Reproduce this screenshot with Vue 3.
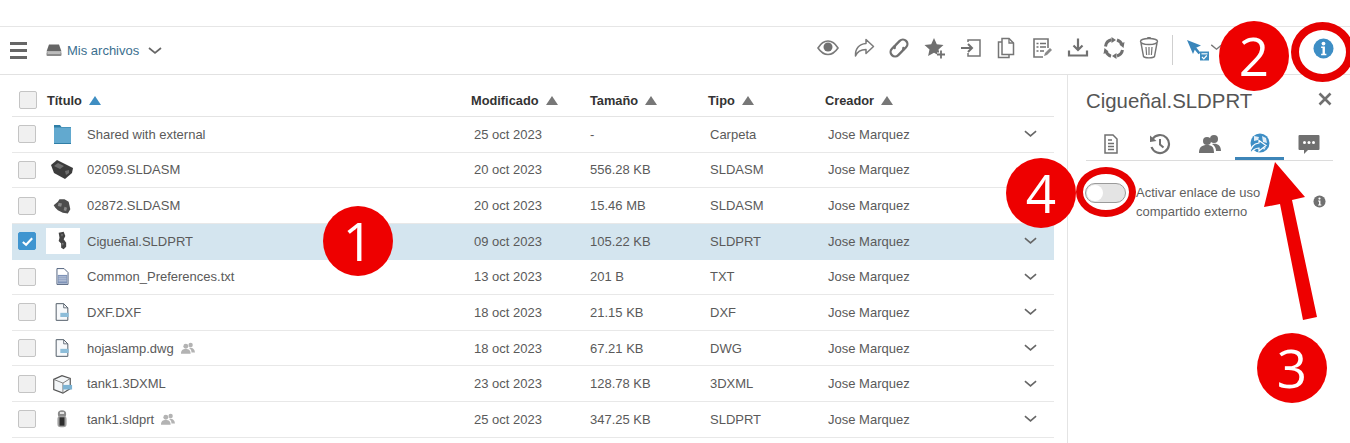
<script setup>
const rows = [
  { name: 'Shared with external', date: '25 oct 2023', size: '-', type: 'Carpeta', icon: 'folder', px: 24 },
  { name: '02059.SLDASM', date: '20 oct 2023', size: '556.28 KB', type: 'SLDASM', icon: 'asm1', px: 24 },
  { name: '02872.SLDASM', date: '20 oct 2023', size: '15.46 MB', type: 'SLDASM', icon: 'asm2', px: 20 },
  { name: 'Cigueñal.SLDPRT', date: '09 oct 2023', size: '105.22 KB', type: 'SLDPRT', icon: 'crank', px: 20, selected: true },
  { name: 'Common_Preferences.txt', date: '13 oct 2023', size: '201 B', type: 'TXT', icon: 'txt', px: 19 },
  { name: 'DXF.DXF', date: '18 oct 2023', size: '21.15 KB', type: 'DXF', icon: 'doc', px: 20 },
  { name: 'hojaslamp.dwg', date: '18 oct 2023', size: '67.21 KB', type: 'DWG', icon: 'doc', px: 20, shared: true },
  { name: 'tank1.3DXML', date: '23 oct 2023', size: '128.78 KB', type: '3DXML', icon: 'cube', px: 22 },
  { name: 'tank1.sldprt', date: '25 oct 2023', size: '347.25 KB', type: 'SLDPRT', icon: 'tank', px: 20, shared: true },
]
const heads = ['Modificado', 'Tamaño', 'Tipo', 'Creador']
</script>

<template>
  <div class="page">
    <div class="top"></div>
    <header class="toolbar">
      <div class="burger"><i></i><i></i><i></i></div>
      <svg class="drive" viewBox="0 0 16 12" width="16" height="13"><path d="M3 0h10l2.500 7h-15z" fill="#666"/><rect x="0.500" y="7.500" width="15" height="4" rx="1" fill="#8a8a8a"/><rect x="1.500" y="8" width="13" height="1" fill="#eee"/></svg>
      <span class="crumb">Mis archivos</span>
      <svg class="crumb-chev" viewBox="0 0 14 8" width="14" height="8"><path d="M1 1l6 5 6-5" fill="none" stroke="#666" stroke-width="1.700"/></svg>
      <div class="tools">
        <svg viewBox="0 0 22 22" class="t"><path d="M1 11c3-5 6.500-7 10-7s7 2 10 7c-3 4.500-6.500 6.500-10 6.500S4 15.500 1 11z" fill="none" stroke="#7a7a7a" stroke-width="1.600"/><circle cx="11" cy="10" r="4.500" fill="#707070"/></svg>
        <svg viewBox="0 0 22 22" class="t"><path d="M13 2.500l7.500 7-7.500 7v-4c-5 0-8.500 1.500-10.500 6.500C2 12 6 7 13 6.500z" fill="none" stroke="#7a7a7a" stroke-width="1.500" stroke-linejoin="round"/></svg>
        <svg viewBox="0 0 22 22" class="t"><g fill="none" stroke="#707070" stroke-width="2.300" stroke-linecap="round" transform="rotate(-45 11 11)"><path d="M9.500 6.500H5.500a4.500 4.500 0 0 0 0 9H11a4.500 4.500 0 0 0 3.200-1.500"/><path d="M12.500 15.500h4a4.500 4.500 0 0 0 0-9H11a4.500 4.500 0 0 0-3.200 1.500"/></g></svg>
        <svg viewBox="0 0 22 22" class="t"><path d="M10 1l2.800 6.300 6.700.7-5 4.500 1.400 6.600L10 15.800l-5.900 3.300 1.400-6.600-5-4.500 6.700-.7z" fill="#707070"/><path d="M13 17.500h8M17 13.500v8" stroke="#fff" stroke-width="4"/><path d="M13 17.500h8M17 13.500v8" stroke="#707070" stroke-width="1.800"/></svg>
        <svg viewBox="0 0 22 22" class="t"><path d="M8 5V3h12v16H8v-3" fill="none" stroke="#757575" stroke-width="1.500"/><path d="M1 11h10M8 7l4 4-4 4" fill="none" stroke="#707070" stroke-width="2"/></svg>
        <svg viewBox="0 0 22 22" class="t"><path d="M7 1.500h7l4.500 4.500v11.500H7z" fill="#fff" stroke="#757575" stroke-width="1.500"/><path d="M14 1.500V6h4.500" fill="none" stroke="#757575" stroke-width="1.300"/><path d="M7 5H3.500v15.500H14v-3" fill="none" stroke="#757575" stroke-width="1.500"/></svg>
        <svg viewBox="0 0 22 22" class="t"><path d="M17 11V2H3v18h9" fill="none" stroke="#757575" stroke-width="1.600"/><path d="M5.500 6.500h2M9 6.500h6M5.500 10h2M9 10h6M5.500 14h2M9 14h4" stroke="#707070" stroke-width="1.400"/><path d="M13 19l1-3 5-5 2 2-5 5z" fill="#8a8a8a"/></svg>
        <svg viewBox="0 0 22 22" class="t"><path d="M11 1.500v11M6.500 8.500l4.500 4.500 4.500-4.500" fill="none" stroke="#707070" stroke-width="2.200"/><path d="M2 13.500v5h18v-5" fill="none" stroke="#707070" stroke-width="2.200"/></svg>
        <svg viewBox="0 0 22 22" class="t"><path d="M2.500 9.500C3 6 5 3.500 8.500 2.800M14 3c2.500.8 4.300 2.500 5 5M19.500 13c-.5 3-2.500 5-5.500 6M8 19.200c-2.500-.7-4.300-2.500-5-5" fill="none" stroke="#707070" stroke-width="3"/><path d="M8.500 0l4.500 3-4.500 3zM21.500 5l-1 6-4-3.500zM13.500 22l-4.500-3 4.500-3zM.5 17l1-6 4 3.500z" fill="#707070"/></svg>
        <svg viewBox="0 0 22 22" class="t"><ellipse cx="11" cy="4.500" rx="8.500" ry="3" fill="none" stroke="#757575" stroke-width="1.400"/><path d="M8.500 2l1-1.500h3l1 1.500" fill="none" stroke="#757575"/><path d="M3 6l2.500 13.500c1.500 1.800 9.500 1.800 11 0L19 6" fill="none" stroke="#757575" stroke-width="1.400"/><path d="M8 10l.6 8M11 10v8M14 10l-.6 8" stroke="#757575" stroke-width="1.200"/></svg>
        <span class="sep"></span>
        <svg viewBox="0 0 24 22" class="cursor"><path d="M1 1l14 5.500-5.500 2.500L7 15z" fill="#3a86bb"/><path d="M9 9l4.500 5.500" stroke="#3a86bb" stroke-width="2.600"/><rect x="14" y="12.500" width="9" height="9" fill="#3e8dc0"/><rect x="15.500" y="14" width="6" height="1.500" fill="#cfe3f0"/><path d="M16 18l1.800 1.800 3-3.300" fill="none" stroke="#fff" stroke-width="1.200"/></svg>
        <svg viewBox="0 0 14 8" width="13" height="7" class="cursor-chev"><path d="M1 1l6 5 6-5" fill="none" stroke="#777" stroke-width="1.500"/></svg>
      </div>
      <svg viewBox="0 0 22 22" class="info-main"><circle cx="11" cy="11" r="10.500" fill="#3d8ec5"/><circle cx="11" cy="5.800" r="2" fill="#fff"/><path d="M8.500 9h4v7.500H14v1.500H8.500v-1.500H10V10.500H8.500z" fill="#fff"/></svg>
    </header>

    <main class="body">
      <section class="list">
        <div class="head">
          <span class="box"></span>
          <span class="hcell"><b>Título</b><i class="tri blue"></i></span>
          <span v-for="h in heads" :key="h" class="hcell"><b>{{ h }}</b><i class="tri"></i></span>
        </div>
        <div v-for="r in rows" :key="r.name" class="row" :class="{ selected: r.selected }">
          <span class="box" :class="{ checked: r.selected }">
            <svg v-if="r.selected" viewBox="0 0 16 16" width="15" height="15"><path d="M3 8.500l3.500 3L13 4.500" fill="none" stroke="#fff" stroke-width="2.200"/></svg>
          </span>
          <span class="thumb">
            <svg viewBox="0 0 24 24" :style="{ width: r.px + 'px', height: r.px + 'px' }">
              <template v-if="r.icon === 'folder'">
                <path d="M4 3h6l1.500 2H21v17H4z" fill="#2f7ea6"/><rect x="4" y="5.500" width="17" height="15.500" fill="#62a9cf"/>
              </template>
              <template v-else-if="r.icon === 'asm1'">
                <path d="M1 7l6-5 16 8-1 5-7 6-11-6z" fill="#3c3c3c"/><path d="M4 8l4-3 6 3-4 3zM15 13l4-1 0 3-3 2z" fill="#6e6e6e"/>
              </template>
              <template v-else-if="r.icon === 'asm2'">
                <path d="M2 11l5-4 2-3 6 0 5 3 2 9-3 5-6-1-6-3-3-3z" fill="#4d4d4d"/><path d="M8 8l4 1-1 4-4-1zM15 13l3 1-1 4-3-1z" fill="#8a8a8a"/>
              </template>
              <template v-else-if="r.icon === 'crank'">
                <path d="M8 2l6-1 2 5-2 4 3 4 0 5-3 3-3-2 0-5-3-3 1-4z" fill="#444"/><path d="M11 4h2l-1 3zM12 14l2 1-1 3z" fill="#8c8c8c"/>
              </template>
              <template v-else-if="r.icon === 'txt'">
                <path d="M5 2h9l5 5v15H5z" fill="#fff" stroke="#4c5d7a" stroke-width="1.200"/><rect x="6" y="10" width="12" height="11" fill="#7f93b8"/><path d="M7 12.500h10M7 15h10M7 17.500h10" stroke="#d8dfeb"/>
              </template>
              <template v-else-if="r.icon === 'doc'">
                <path d="M5 2h9l5 5v15H5z" fill="#f7f9fb" stroke="#55606b" stroke-width="1.200"/><path d="M14 2v5h5" fill="none" stroke="#55606b"/><rect x="10" y="13" width="10" height="5" fill="#8dbdd9"/>
              </template>
              <template v-else-if="r.icon === 'cube'">
                <path d="M3 7l9-4 9 3v11l-8 5-10-4z" fill="#f3f6f8" stroke="#555" stroke-width="1.300"/><path d="M3 7l10 4 8-5M13 11v11" fill="none" stroke="#777"/><rect x="13" y="13" width="10" height="5" fill="#7db3d3"/>
              </template>
              <template v-else>
                <ellipse cx="12" cy="6" rx="5" ry="4.500" fill="#8a8a8a"/><rect x="6.500" y="8" width="11" height="14" rx="4" fill="#a0a0a0"/><rect x="9" y="10" width="6" height="10" fill="#2d2d2d"/><rect x="9.500" y="3.500" width="5" height="2.500" fill="#e4e4e4"/>
              </template>
            </svg>
          </span>
          <span class="name">{{ r.name }}
            <svg v-if="r.shared" class="people" viewBox="0 0 16 13" width="14" height="12"><circle cx="5.500" cy="4.500" r="2.800" fill="#b3b3b3"/><circle cx="11" cy="3" r="2.500" fill="#b3b3b3"/><path d="M0 13c0-4 2-5.500 5.500-5.500S11 9 11 13zM9 6.500c3.500-1 6.500.5 7 5h-4c0-2-1-4-3-5z" fill="#b3b3b3"/></svg>
          </span>
          <span>{{ r.date }}</span>
          <span>{{ r.size }}</span>
          <span>{{ r.type }}</span>
          <span>Jose Marquez</span>
          <svg class="chev" viewBox="0 0 14 8" width="13" height="8"><path d="M1 1l6 5 6-5" fill="none" stroke="#666" stroke-width="1.700"/></svg>
        </div>
      </section>

      <aside class="panel">
        <div class="panel-head">
          <h2>Cigueñal.SLDPRT</h2>
          <svg viewBox="0 0 14 14" width="14" height="14"><path d="M1.500 1.500l11 11M12.500 1.500l-11 11" stroke="#707070" stroke-width="2.600"/></svg>
        </div>
        <nav class="tabs">
          <span class="tab">
            <svg viewBox="0 0 22 22" width="22" height="22"><path d="M5 2h8l4 4v14H5z" fill="none" stroke="#707070" stroke-width="1.500"/><path d="M8 7h4M8 10.500h6M8 13.500h6M8 16.500h6" stroke="#707070" stroke-width="1.500"/></svg>
          </span>
          <span class="tab">
            <svg viewBox="0 0 22 22" width="22" height="22"><path d="M3.500 6A9 9 0 1 1 2.500 14" fill="none" stroke="#707070" stroke-width="2.200"/><path d="M1 2.500L7.500 8 1 9z" fill="#707070"/><path d="M11 6v5.500l3.500 3" fill="none" stroke="#707070" stroke-width="2"/></svg>
          </span>
          <span class="tab">
            <svg viewBox="0 0 22 22" width="22" height="22"><circle cx="8" cy="8" r="4" fill="#707070"/><circle cx="15" cy="6" r="4" fill="#707070"/><path d="M0 20c0-6 3-8 8-8s7 2 7 8zM13 11c5-1 9 1 9 7h-5c0-3-1-5-4-7z" fill="#707070"/></svg>
          </span>
          <span class="tab active">
            <svg viewBox="0 0 22 22" width="22" height="22"><circle cx="12" cy="10" r="9.500" fill="#3d8ec5"/><path d="M6 3l5 1-1 3-4 1zM14 3l4 2 1 5-4-1zM15 15l3-1-2 3z" fill="#fff" opacity=".85"/><path d="M11 7.500l7 5-7 5.500v-3c-4 0-6 1.500-9 6 .5-7 3.500-10.500 9-11z" fill="#3d8ec5" stroke="#fff" stroke-width="1.200"/></svg>
          </span>
          <span class="tab">
            <svg viewBox="0 0 22 22" width="22" height="22"><path d="M1.500 2h19a1 1 0 0 1 1 1v13a1 1 0 0 1-1 1H10l-4 4v-4H1.500a1 1 0 0 1-1-1V3a1 1 0 0 1 1-1z" fill="#707070"/><circle cx="6.500" cy="9.500" r="1.500" fill="#fff"/><circle cx="11" cy="9.500" r="1.500" fill="#fff"/><circle cx="15.500" cy="9.500" r="1.500" fill="#fff"/></svg>
          </span>
        </nav>
        <div class="setting">
          <span class="toggle"><i></i></span>
          <p>Activar enlace de uso compartido externo</p>
          <svg viewBox="0 0 14 14" width="13" height="13" class="mini"><circle cx="7" cy="7" r="6.500" fill="#707070"/><circle cx="7" cy="3.800" r="1.200" fill="#fff"/><path d="M5.500 6h2.500v4.200h1v1H5.500v-1h1V7H5.500z" fill="#fff"/></svg>
        </div>
      </aside>
    </main>

    <span class="mark m1">1</span>
    <span class="mark m2">2</span>
    <span class="mark m3">3</span>
    <span class="mark m4">4</span>
    <span class="ring r-info"></span>
    <span class="ring r-toggle"></span>
    <svg class="arrow" viewBox="0 0 70 170" width="70" height="170"><path d="M12 1L1 46l16-3 23 116 14-3L29 39l13-3z" fill="#ee0000"/></svg>
  </div>
</template>

<style>
html, body { margin: 0; background: #fff; }
</style>

<style scoped>
.page { position: relative; width: 1350px; height: 443px; overflow: hidden; background: #fff; font: 13px "Liberation Sans", Arial, sans-serif; color: #5a5a5a; }
.top { height: 26px; border-bottom: 1px solid #e6e6e6; }
.toolbar { height: 47px; border-bottom: 1px solid #e2e2e2; display: flex; align-items: center; padding-left: 10px; }
.burger { width: 17px; display: flex; flex-direction: column; gap: 4px; margin-right: 19px; }
.burger i { height: 3px; background: #666; display: block; }
.drive { margin-right: 5px; }
.crumb { color: #3b6f8f; font-size: 13px; }
.crumb-chev { margin-left: 9px; }
.tools { position: absolute; left: 817px; top: 33px; height: 30px; display: flex; align-items: center; gap: 13.700px; }
.t { width: 22px; height: 22px; }
.sep { width: 1px; height: 30px; background: #cfcfcf; margin-top: 4px; margin-left: -2px; }
.cursor { width: 24px; height: 22px; margin-left: -1px; margin-top: 3px; }
.cursor-chev { margin-left: -13px; margin-top: -1px; }
.info-main { position: absolute; left: 1313px; top: 38px; width: 21px; height: 21px; }
.body { display: flex; height: 368px; }
.list { margin-left: 12px; width: 1042px; flex: none; }
.head { height: 42px; display: grid; grid-template-columns: 35px 424px 119px 118px 117px 1fr; align-items: center; border-bottom: 1px solid #e4e4e4; box-sizing: border-box; padding-top: 9px; }
.head .box { margin-left: 7px; }
.hcell { display: flex; align-items: center; gap: 7px; color: #333; }
.hcell b { font-weight: 700; font-size: 12.800px; }
.tri { width: 0; height: 0; border-left: 6.500px solid transparent; border-right: 6.500px solid transparent; border-bottom: 9px solid #777; }
.tri.blue { border-bottom-color: #3f8ec2; }
.row { height: 35.630px; box-sizing: border-box; display: grid; grid-template-columns: 34px 41px 387px 116px 120px 118px 180px 1fr; align-items: center; border-bottom: 1px solid #e8e8e8; color: #5a5a5a; }
.row.selected { background: #d4e5ef; border-bottom-color: #d4e5ef; }
.box { width: 16px; height: 16px; border: 1px solid #c4c4c4; background: #f0f0f0; border-radius: 2px; margin-left: 6px; display: flex; align-items: center; justify-content: center; }
.box.checked { background: #3f95d0; border-color: #3f95d0; }
.thumb { width: 34px; height: 26px; display: flex; align-items: center; justify-content: center; }
.selected .thumb { background: #fff; }
.thumb svg { margin-right: 2px; }
.name { display: flex; align-items: center; gap: 7px; }
.people { flex: none; }
.chev { justify-self: center; margin-left: -1px; }
.panel { width: 283px; flex: none; margin-left: 13px; border-left: 1px solid #e4e4e4; box-sizing: border-box; padding: 0 18px 0 18px; }
.panel-head { display: flex; align-items: center; justify-content: space-between; height: 52px; }
.panel-head h2 { margin: 0; font-size: 20.400px; font-weight: 400; color: #555; }
.panel-head svg { margin-top: -5px; }
.tabs { display: grid; grid-template-columns: repeat(5, 49.500px); height: 33px; width: 247px; border-bottom: 1px solid #dcdcdc; }
.tab { display: flex; justify-content: center; align-items: flex-start; height: 33px; box-sizing: border-box; padding-top: 6px; }
.tab.active { border-bottom: 3px solid #3d85b8; }
.setting { display: flex; align-items: flex-start; padding-top: 22px; }
.toggle { width: 41px; height: 20px; box-sizing: border-box; border: 1px solid #9a9a9a; border-radius: 10px; background: #e4e4e4; display: block; flex: none; margin-right: 10px; margin-left: -1px; }
.toggle i { display: block; width: 16px; height: 16px; margin: 1px; border-radius: 50%; background: #fff; }
.setting p { margin: 0; width: 170px; font-size: 13px; line-height: 19px; color: #5f5f5f; flex: none; }
.mini { margin-left: 7px; margin-top: 12px; flex: none; }
.mark { position: absolute; width: 70px; height: 70px; border-radius: 50%; background: #ee0000; color: #fff; font: 400 53px/70px "Open Sans", sans-serif; text-align: center; }
.m1 { left: 323px; top: 206px; }
.m2 { left: 1219px; top: 21px; }
.m3 { left: 1257px; top: 333px; }
.m4 { left: 1006px; top: 158px; }
.ring { position: absolute; box-sizing: border-box; border-style: solid; border-color: #e60000; border-radius: 50%; }
.r-info { left: 1291px; top: 22px; width: 63px; height: 60px; border-width: 8px; }
.r-toggle { left: 1076px; top: 167px; width: 60px; height: 50px; border-width: 7px; }
.arrow { position: absolute; left: 1263px; top: 161px; }
</style>
